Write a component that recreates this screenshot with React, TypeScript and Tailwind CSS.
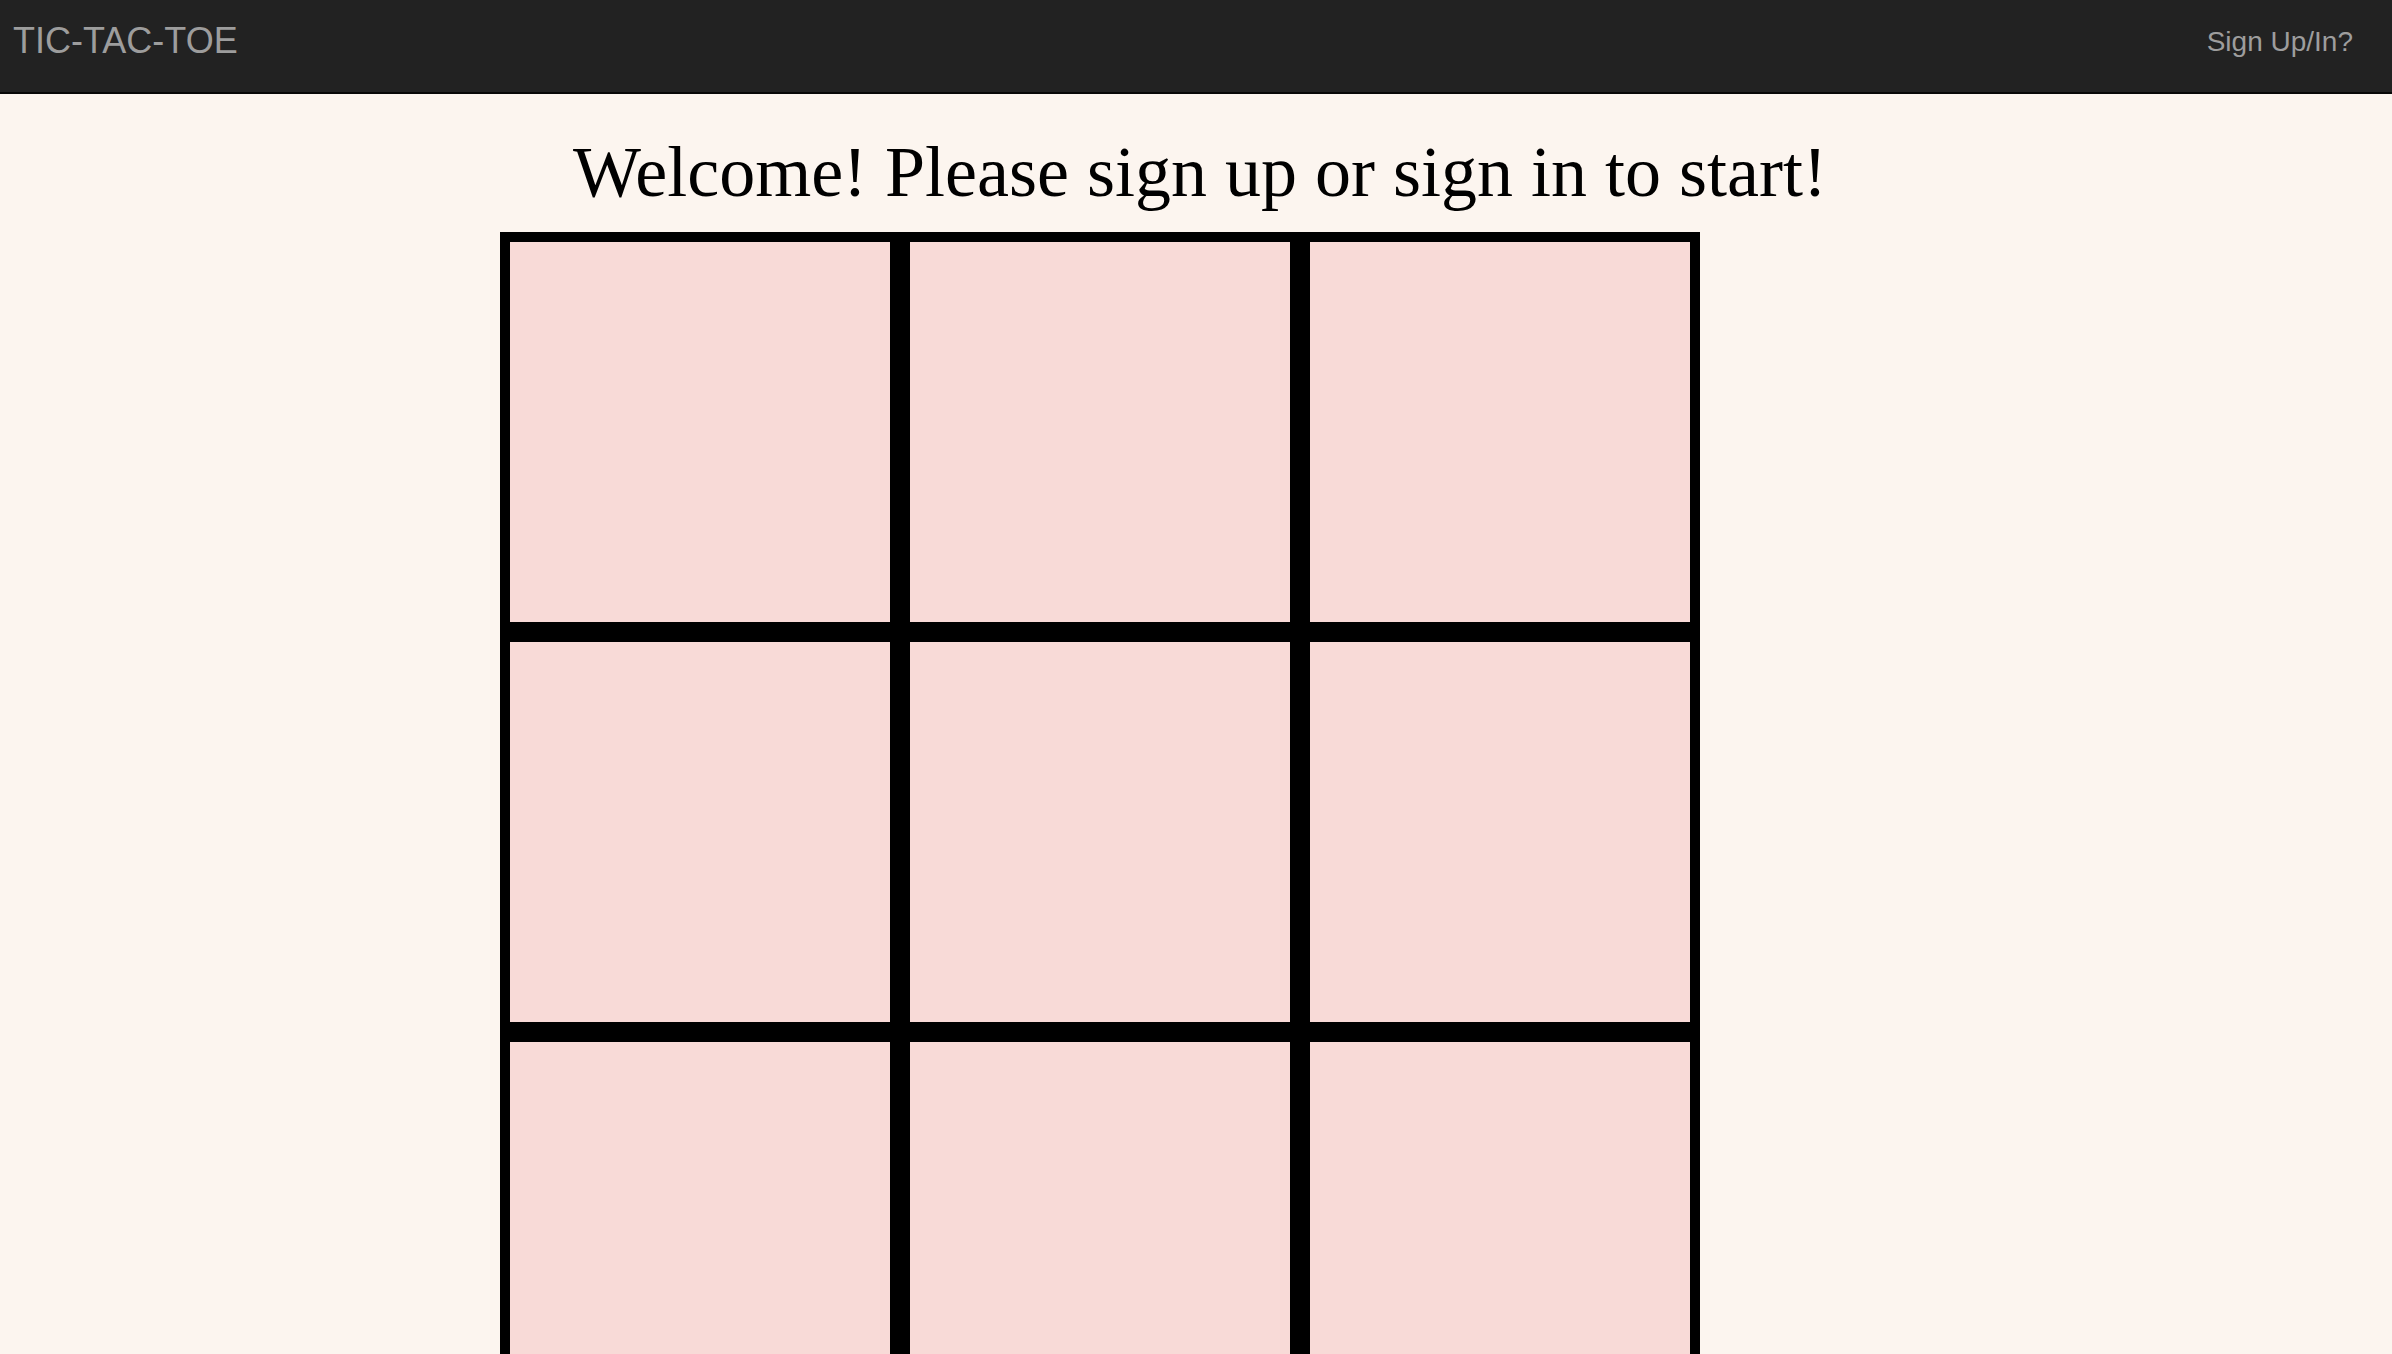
import React from "react"

const cells = Array.from({ length: 9 }, (_, i) => i)

function NavBar() {
  return (
    <nav className="flex h-[94px] items-start justify-between border-b-2 border-[#080808] bg-[#222222] font-['Liberation_Sans',Arial,sans-serif] text-[#9d9d9d]">
      <a className="pl-[13px] pt-[23px] text-[36px] leading-[36px]">TIC-TAC-TOE</a>
      <a className="pr-[39px] pt-[28px] text-[28px] leading-[28px]">Sign Up/In?</a>
    </nav>
  )
}

function Board() {
  return (
    <div className="ml-[500px] mt-[20px] grid w-[1200px] grid-cols-3">
      {cells.map((i) => (
        <div key={i} className="h-[400px] w-[400px] border-[10px] border-black bg-[#f8dad7]" />
      ))}
    </div>
  )
}

export default function App() {
  return (
    <div className="min-h-screen bg-[#fcf5ef]">
      <NavBar />
      <h1 className="mt-[39px] pl-[8px] text-center font-['Liberation_Serif','Times_New_Roman',serif] text-[72px] font-normal leading-[1.1] text-black">
        Welcome! Please sign up or sign in to start!
      </h1>
      <Board />
    </div>
  )
}
